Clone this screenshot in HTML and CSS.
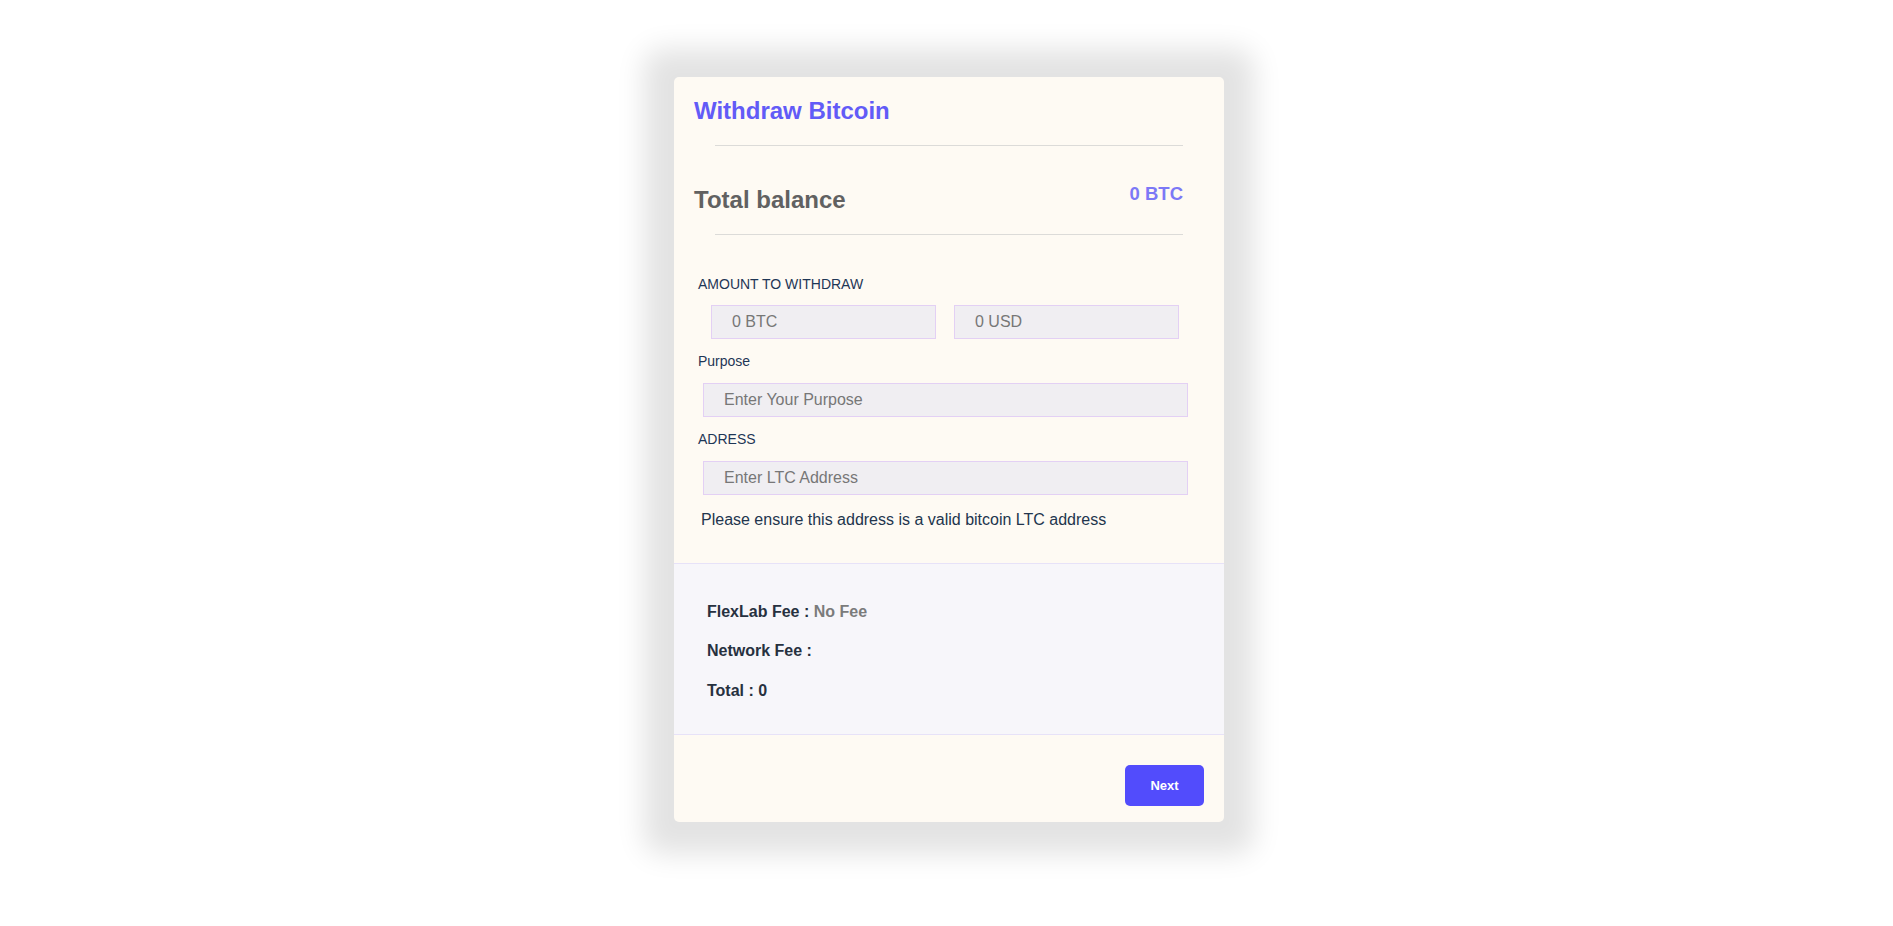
FILE: index.html
```html
<!DOCTYPE html>
<html lang="en">
<head>
<meta charset="utf-8">
<title>Withdraw Bitcoin</title>
<link rel="stylesheet" href="styles.css">
</head>
<body>
<div class="page">
  <div class="card">
    <div class="card-head">
      <h2 class="title">Withdraw Bitcoin</h2>
      <hr class="rule">
      <div class="balance">
        <h3 class="balance-label">Total balance</h3>
        <span class="balance-amount">0 BTC</span>
      </div>
      <hr class="rule">
    </div>
    <form class="form">
      <label class="label">AMOUNT TO WITHDRAW</label>
      <div class="amount-row">
        <input class="input input-half" type="text" placeholder="0 BTC">
        <input class="input input-half" type="text" placeholder="0 USD">
      </div>
      <label class="label">Purpose</label>
      <input class="input input-full" type="text" placeholder="Enter Your Purpose">
      <label class="label">ADRESS</label>
      <input class="input input-full" type="text" placeholder="Enter LTC Address">
      <p class="hint">Please ensure this address is a valid bitcoin LTC address</p>
    </form>
    <div class="fees">
      <p class="fee-line">FlexLab Fee : <span class="fee-muted">No Fee</span></p>
      <p class="fee-line">Network Fee :</p>
      <p class="fee-line">Total : 0</p>
    </div>
    <div class="foot">
      <button class="btn" type="button">Next</button>
    </div>
  </div>
</div>
</body>
</html>
```

FILE: styles.css
```css
* {
  box-sizing: border-box;
}

html, body {
  margin: 0;
  padding: 0;
  background: #ffffff;
  font-family: "Liberation Sans", Arial, sans-serif;
}

.page {
  display: flex;
  justify-content: center;
  align-items: flex-start;
  min-height: 100vh;
  padding: 77px 0 80px 5px;
}

.card {
  width: 550px;
  background: #fefaf3;
  border-radius: 5px;
  box-shadow: 0 2px 28px 30px rgba(0, 0, 0, 0.115);
  display: flex;
  flex-direction: column;
}

.card-head {
  padding-top: 20px;
}

.title {
  margin: 0;
  padding-left: 20px;
  font-size: 24px;
  line-height: 28px;
  font-weight: 700;
  color: #625bf7;
}

.rule {
  width: 85%;
  margin: 20px auto 0;
  border: 0;
  height: 1px;
  background: #dcdbd8;
}

.balance {
  margin-top: 40px;
  padding: 0 41px 0 20px;
  display: flex;
  justify-content: space-between;
  align-items: flex-start;
}

.balance-label {
  margin: 0;
  font-size: 24px;
  line-height: 28px;
  font-weight: 700;
  color: #616161;
}

.balance-amount {
  margin-top: -2px;
  font-size: 18.5px;
  line-height: 20px;
  font-weight: 700;
  color: #7c78f6;
}

.form {
  display: flex;
  flex-direction: column;
  align-items: flex-start;
  padding: 41px 24px 0;
}

.label {
  display: block;
  font-size: 14px;
  line-height: 16px;
  color: #1e3656;
  margin-top: 14px;
}

.label:first-child {
  margin-top: 0;
}

.amount-row {
  display: flex;
  gap: 18px;
  margin-top: 13px;
  padding-left: 13px;
}

.input {
  display: block;
  height: 34px;
  margin: 0;
  padding: 0 20px;
  border: 1px solid #e3d0f4;
  border-radius: 0;
  background: #f0eef2;
  font-family: "Liberation Sans", Arial, sans-serif;
  font-size: 16px;
  color: #555;
  outline: none;
}

.input::placeholder {
  color: #777777;
  opacity: 1;
}

.input-half {
  width: 225px;
}

.input-full {
  width: 485px;
  margin-top: 14px;
  margin-left: 5px;
}

.hint {
  margin: 16px 0 0;
  padding-left: 3px;
  font-size: 16px;
  line-height: 18px;
  color: #22354d;
}

.fees {
  margin-top: 34px;
  border-top: 1px solid #e7e2f8;
  border-bottom: 1px solid #e7e2f8;
  background: #f7f6fa;
  padding: 38.5px 33px 34.5px;
  display: flex;
  flex-direction: column;
  gap: 21.5px;
}

.fee-line {
  margin: 0;
  font-size: 16px;
  line-height: 18px;
  font-weight: 700;
  color: #27313f;
}

.fee-muted {
  color: #7b7b7b;
}

.foot {
  display: flex;
  justify-content: flex-end;
  padding: 30px 20px 16px;
}

.btn {
  width: 79px;
  height: 41px;
  border: 0;
  border-radius: 5px;
  background: #524cfc;
  color: #ffffff;
  font-family: "Liberation Sans", Arial, sans-serif;
  font-size: 13px;
  font-weight: 700;
  cursor: pointer;
}
```
